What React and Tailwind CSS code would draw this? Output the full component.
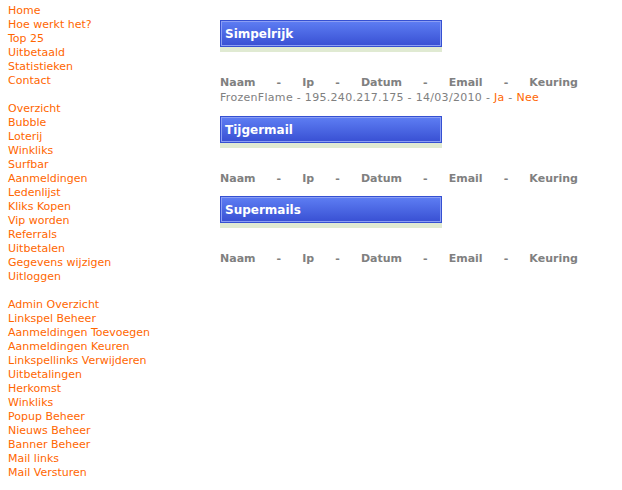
import React from 'react';

const navGroups = [
  ['Home', 'Hoe werkt het?', 'Top 25', 'Uitbetaald', 'Statistieken', 'Contact'],
  ['Overzicht', 'Bubble', 'Loterij', 'Winkliks', 'Surfbar', 'Aanmeldingen', 'Ledenlijst', 'Kliks Kopen', 'Vip worden', 'Referrals', 'Uitbetalen', 'Gegevens wijzigen', 'Uitloggen'],
  ['Admin Overzicht', 'Linkspel Beheer', 'Aanmeldingen Toevoegen', 'Aanmeldingen Keuren', 'Linkspellinks Verwijderen', 'Uitbetalingen', 'Herkomst', 'Winkliks', 'Popup Beheer', 'Nieuws Beheer', 'Banner Beheer', 'Mail links', 'Mail Versturen'],
];

const sections = [
  { title: 'Simpelrijk', rows: [['FrozenFlame', '195.240.217.175', '14/03/2010']], pb: 'pb-[11px]' },
  { title: 'Tijgermail', rows: [], pb: 'pb-[10px]' },
  { title: 'Supermails', rows: [], pb: 'pb-[10px]' },
];

const columns = ['Naam', '-', 'Ip', '-', 'Datum', '-', 'Email', '-', 'Keuring'];

const Header = ({ title }) => (
  <div className="w-[222px]">
    <div className="h-[27px] border border-[#3550d2]">
      <div className="h-full border border-[#8b9ef4] bg-gradient-to-b from-[#5d7cf2] to-[#3a51d4] pl-[3px] pt-[2px] text-[12px] leading-[21px] font-bold text-white">
        {title}
      </div>
    </div>
    <div className="h-[5px] bg-[#e0ead2]" />
  </div>
);

const Section = ({ section }) => (
  <div className={section.pb}>
    <Header title={section.title} />
    <div className="mt-[23px] w-[358px] flex justify-between font-bold text-[#808080] leading-[15px]">
      {columns.map((c, i) => (
        <span key={i}>{c}</span>
      ))}
    </div>
    {section.rows.map((r, i) => (
      <div key={i} className="leading-[15px] text-[#808080] whitespace-nowrap tracking-[0.3px]">
        {r[0]} - {r[1]} - {r[2]} - <a href="#" className="text-[#ff6600]">Ja</a> - <a href="#" className="text-[#ff6600]">Nee</a>
      </div>
    ))}
  </div>
);

export default function App() {
  return (
    <div className="w-[622px] h-[490px] bg-white flex text-[11px] overflow-hidden" style={{ fontFamily: '"DejaVu Sans", Verdana, sans-serif' }}>
      <div className="w-[220px] shrink-0 pl-2 pt-[4px] leading-[14px]">
        {navGroups.map((group, gi) => (
          <div key={gi} className={gi > 0 ? 'mt-[14px]' : ''}>
            {group.map((item, i) => (
              <div key={i}>
                <a href="#" className="text-[#ff6600]">{item}</a>
              </div>
            ))}
          </div>
        ))}
      </div>
      <div className="pt-[20px]">
        {sections.map((s) => (
          <Section key={s.title} section={s} />
        ))}
      </div>
    </div>
  );
}
